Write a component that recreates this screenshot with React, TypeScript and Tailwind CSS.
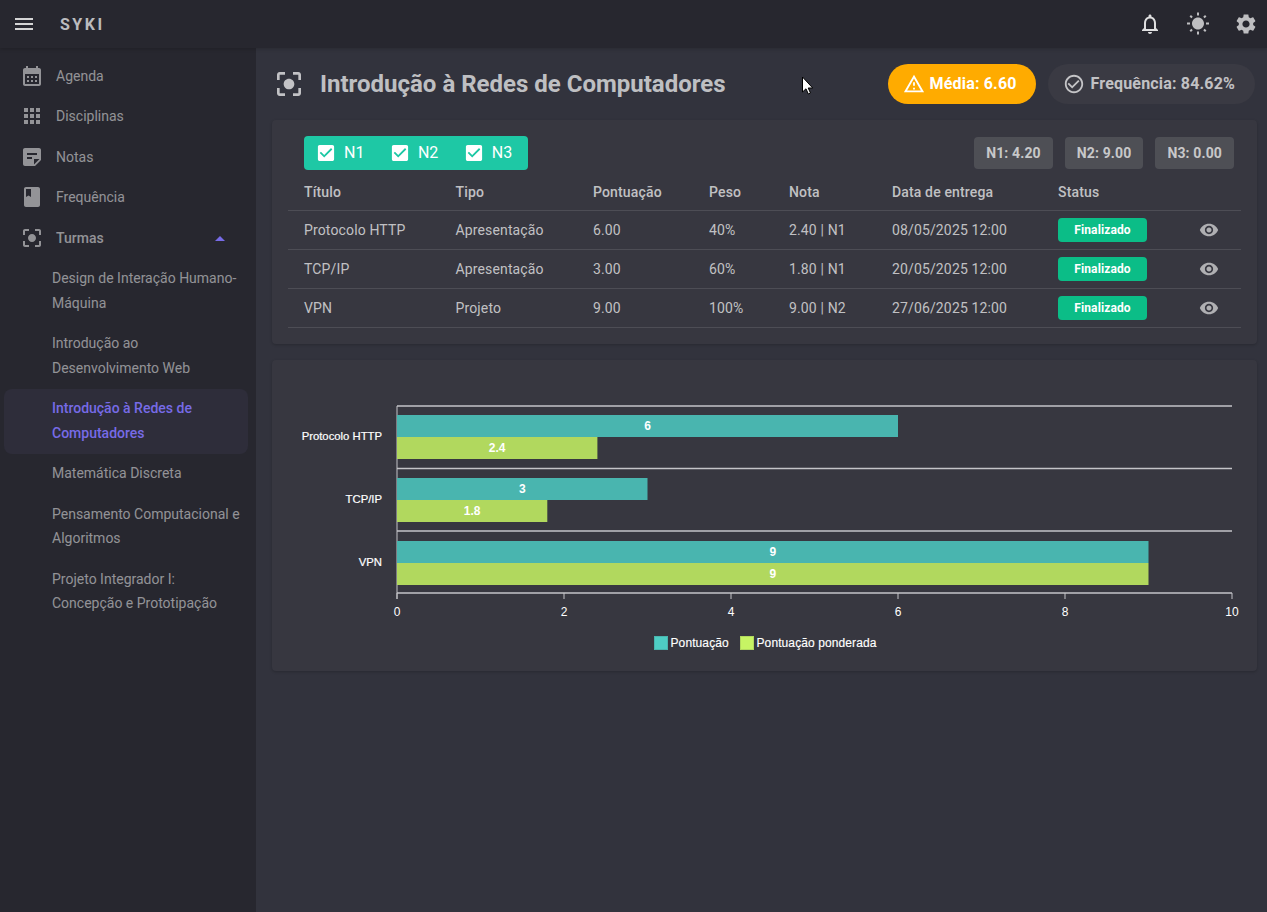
import React from 'react';

const icons = {
  menu: 'M3 18h18v-2H3v2zm0-5h18v-2H3v2zm0-7v2h18V6H3z',
  calendar: 'M19 4h-1V2h-2v2H8V2H6v2H5c-1.1 0-2 .9-2 2v14c0 1.1.9 2 2 2h14c1.1 0 2-.9 2-2V6c0-1.1-.9-2-2-2zm0 16H5V10h14v10zM9 14H7v-2h2v2zm4 0h-2v-2h2v2zm4 0h-2v-2h2v2zm-8 4H7v-2h2v2zm4 0h-2v-2h2v2zm4 0h-2v-2h2v2z',
  apps: 'M4 8h4V4H4v4zm6 12h4v-4h-4v4zm-6 0h4v-4H4v4zm0-6h4v-4H4v4zm6 0h4v-4h-4v4zm6-10v4h4V4h-4zm-6 4h4V4h-4v4zm6 6h4v-4h-4v4zm0 6h4v-4h-4v4z',
  note: 'M19 3H4.99C3.89 3 3 3.9 3 5l.01 14c0 1.1.89 2 1.99 2h10l6-6V5c0-1.1-.9-2-2-2zM7 8h10v2H7V8zm5 6H7v-2h5v2zm2 5.5V14h5.5L14 19.5z',
  book: 'M18 2H6c-1.1 0-2 .9-2 2v16c0 1.1.9 2 2 2h12c1.1 0 2-.9 2-2V4c0-1.1-.9-2-2-2zM6 4h5v8l-2.5-1.5L6 12V4z',
  focus: 'M5 15H3v4c0 1.1.9 2 2 2h4v-2H5v-4zM5 5h4V3H5c-1.1 0-2 .9-2 2v4h2V5zm14-2h-4v2h4v4h2V5c0-1.1-.9-2-2-2zm0 16h-4v2h4c1.1 0 2-.9 2-2v-4h-2v4zM12 8c-2.21 0-4 1.79-4 4s1.79 4 4 4 4-1.79 4-4-1.79-4-4-4z',
  bell: 'M12 22c1.1 0 2-.9 2-2h-4c0 1.1.9 2 2 2zm6-6v-5c0-3.07-1.63-5.64-4.5-6.32V4c0-.83-.67-1.5-1.5-1.5s-1.5.67-1.5 1.5v.68C7.64 5.36 6 7.92 6 11v5l-2 2v1h16v-1l-2-2zm-2 1H8v-6c0-2.48 1.51-4.5 4-4.5s4 2.02 4 4.5v6z',
  sun: 'M6.76 4.84l-1.8-1.79-1.41 1.41 1.79 1.79 1.42-1.41zM4 10.5H1v2h3v-2zm9-9.95h-2V3.5h2V.55zm7.45 3.91l-1.41-1.41-1.79 1.79 1.41 1.41 1.79-1.79zm-3.21 13.7l1.79 1.8 1.41-1.41-1.8-1.79-1.4 1.4zM20 10.5v2h3v-2h-3zm-8-5c-3.31 0-6 2.69-6 6s2.69 6 6 6 6-2.69 6-6-2.69-6-6-6zm-1 16.95h2V19.5h-2v2.95zm-7.45-3.91l1.41 1.41 1.79-1.8-1.41-1.41-1.79 1.8z',
  gear: 'M19.14 12.94c.04-.3.06-.61.06-.94 0-.32-.02-.64-.07-.94l2.03-1.58c.18-.14.23-.41.12-.61l-1.92-3.32c-.12-.22-.37-.29-.59-.22l-2.39.96c-.5-.38-1.03-.7-1.62-.94l-.36-2.54c-.04-.24-.24-.41-.48-.41h-3.84c-.24 0-.43.17-.47.41l-.36 2.54c-.59.24-1.13.57-1.62.94l-2.39-.96c-.22-.08-.47 0-.59.22L2.74 8.87c-.12.21-.08.47.12.61l2.03 1.58c-.05.3-.09.63-.09.94s.02.64.07.94l-2.03 1.58c-.18.14-.23.41-.12.61l1.92 3.32c.12.22.37.29.59.22l2.39-.96c.5.38 1.03.7 1.62.94l.36 2.54c.05.24.24.41.48.41h3.84c.24 0 .44-.17.47-.41l.36-2.54c.59-.24 1.13-.56 1.62-.94l2.39.96c.22.08.47 0 .59-.22l1.92-3.32c.12-.22.07-.47-.12-.61l-2.01-1.58zM12 15.6c-1.98 0-3.6-1.62-3.6-3.6s1.62-3.6 3.6-3.6 3.6 1.62 3.6 3.6-1.62 3.6-3.6 3.6z',
  warning: 'M12 5.99L19.53 19H4.47L12 5.99M12 2L1 21h22L12 2zm1 14h-2v2h2v-2zm0-6h-2v4h2v-4z',
  checkCircle: 'M16.59 7.58L10 14.17l-3.59-3.58L5 12l5 5 8-8zM12 2C6.48 2 2 6.48 2 12s4.48 10 10 10 10-4.48 10-10S17.52 2 12 2zm0 18c-4.42 0-8-3.58-8-8s3.58-8 8-8 8 3.58 8 8-3.58 8-8 8z',
  eye: 'M12 4.5C7 4.5 2.73 7.61 1 12c1.73 4.39 6 7.5 11 7.5s9.27-3.11 11-7.5c-1.73-4.39-6-7.5-11-7.5zM12 17c-2.76 0-5-2.24-5-5s2.24-5 5-5 5 2.24 5 5-2.24 5-5 5zm0-8c-1.66 0-3 1.34-3 3s1.34 3 3 3 3-1.34 3-3-1.34-3-3-3z',
  checkbox: 'M19 3H5c-1.11 0-2 .9-2 2v14c0 1.1.89 2 2 2h14c1.11 0 2-.9 2-2V5c0-1.1-.89-2-2-2zm-9 14l-5-5 1.41-1.41L10 14.17l7.59-7.59L19 8l-9 9z',
};

function Icon({ d, className }: { d: string; className?: string }) {
  return (
    <svg viewBox="0 0 24 24" fill="currentColor" className={className}>
      <path d={d} />
    </svg>
  );
}

const navItems = [
  { label: 'Agenda', icon: icons.calendar, cls: 'h-10' },
  { label: 'Disciplinas', icon: icons.apps, cls: 'h-10' },
  { label: 'Notas', icon: icons.note, cls: 'h-[41px]' },
  { label: 'Frequência', icon: icons.book, cls: 'h-10' },
];

const turmas = [
  { label: 'Design de Interação Humano-Máquina' },
  { label: 'Introdução ao Desenvolvimento Web' },
  { label: 'Introdução à Redes de Computadores', active: true },
  { label: 'Matemática Discreta' },
  { label: 'Pensamento Computacional e Algoritmos' },
  { label: 'Projeto Integrador I: Concepção e Prototipação' },
];

const rows = [
  ['Protocolo HTTP', 'Apresentação', '6.00', '40%', '2.40 | N1', '08/05/2025 12:00'],
  ['TCP/IP', 'Apresentação', '3.00', '60%', '1.80 | N1', '20/05/2025 12:00'],
  ['VPN', 'Projeto', '9.00', '100%', '9.00 | N2', '27/06/2025 12:00'],
];

const headers = ['Título', 'Tipo', 'Pontuação', 'Peso', 'Nota', 'Data de entrega', 'Status', ''];

const chartRows = [
  { label: 'Protocolo HTTP', y: 415, a: 6, b: 2.4 },
  { label: 'TCP/IP', y: 478, a: 3, b: 1.8 },
  { label: 'VPN', y: 541, a: 9, b: 9 },
];

const X0 = 397;
const UNIT = 83.5;

function Chart() {
  return (
    <svg viewBox="272 360 985 311" className="block h-[311px] w-full" style={{ fontFamily: '"Liberation Sans", Arial, sans-serif' }}>
      {[406, 468.5, 531, 593].map(y => (
        <line key={y} x1={X0} x2={1232} y1={y} y2={y} stroke="#c4c4c8" strokeWidth="1.3" />
      ))}
      <line x1={X0} x2={X0} y1={406} y2={599} stroke="#c4c4c8" strokeWidth="1" />
      {[0, 2, 4, 6, 8, 10].map(t => (
        <g key={t}>
          <line x1={X0 + t * UNIT} x2={X0 + t * UNIT} y1={593} y2={599} stroke="#c4c4c8" strokeWidth="1" />
          <text x={X0 + t * UNIT} y={616} textAnchor="middle" fontSize="12" fill="#fff">{t}</text>
        </g>
      ))}
      {chartRows.map(r => (
        <g key={r.label}>
          <rect x={X0} y={r.y} width={r.a * UNIT} height={22} fill="#49b5af" />
          <rect x={X0} y={r.y + 22} width={r.b * UNIT} height={22} fill="#b1d85e" />
          <text x={X0 + (r.a * UNIT) / 2} y={r.y + 15} textAnchor="middle" fontSize="12" fontWeight="700" fill="#fff">{r.a}</text>
          <text x={X0 + (r.b * UNIT) / 2} y={r.y + 37} textAnchor="middle" fontSize="12" fontWeight="700" fill="#fff">{r.b}</text>
          <text x={382} y={r.y + 25} textAnchor="end" fontSize="11.3" stroke="#fff" strokeWidth="0.2" fill="#fff">{r.label}</text>
        </g>
      ))}
      <rect x={654.5} y={636.5} width={13} height={13} fill="#4ecdc4" stroke="#49b5af" />
      <text x={670.5} y={647} fontSize="12" letterSpacing="0.1" stroke="#fff" strokeWidth="0.15" fill="#fff">Pontuação</text>
      <rect x={740.5} y={636.5} width={13} height={13} fill="#c7f464" stroke="#b1d85e" />
      <text x={756.5} y={647} fontSize="12" letterSpacing="0.1" stroke="#fff" strokeWidth="0.15" fill="#fff">Pontuação ponderada</text>
    </svg>
  );
}

function App() {
  return (
    <div className="relative flex h-screen min-h-[912px] flex-col overflow-hidden bg-[#32333d] font-['Roboto',sans-serif] text-sm text-white/70">
      {/* App bar */}
      <header className="z-10 flex h-12 shrink-0 items-center bg-[#27272f] pl-3 pr-[9px] shadow-[0_1px_4px_rgba(0,0,0,0.2)]">
        <Icon d={icons.menu} className="h-6 w-6 text-white/80" />
        <span className="ml-6 pt-px text-base font-bold tracking-[2.5px] text-white/70">SYKI</span>
        <div className="ml-auto flex items-center gap-6">
          <Icon d={icons.bell} className="h-6 w-6 text-white/85" />
          <Icon d={icons.sun} className="h-6 w-6 text-white/70" />
          <Icon d={icons.gear} className="h-6 w-6 text-white/70" />
        </div>
      </header>

      <div className="flex min-h-0 flex-1">
        {/* Sidebar */}
        <aside className="w-64 shrink-0 bg-[#27272f] pt-2">
          {navItems.map(item => (
            <div key={item.label} className={`flex items-center pl-5 ${item.cls}`}>
              <Icon d={item.icon} className="h-6 w-6 text-white/50" />
              <span className="ml-3 text-sm text-white/50">{item.label}</span>
            </div>
          ))}
          <div className="mt-px flex h-10 items-center pl-5 pr-[31px]">
            <Icon d={icons.focus} className="h-6 w-6 text-white/50" />
            <span className="ml-3 font-medium text-white/50">Turmas</span>
            <span className="ml-auto h-0 w-0 border-x-[5px] border-b-[5px] border-x-transparent border-b-[#776be7]" />
          </div>
          {turmas.map(t => (
            <div
              key={t.label}
              className={`ml-1 w-[244px] rounded-lg pl-12 pr-1 leading-[24.5px] ${t.active ? '-mb-px mt-px bg-[#2e2d3a] pb-[9px] pt-[7px] font-medium text-[#776be7]' : 'py-2 text-white/50'}`}
            >
              {t.label}
            </div>
          ))}
        </aside>

        {/* Main */}
        <main className="min-w-0 flex-1 pl-4 pr-[10px]">
          <div className="flex h-[72px] items-center">
            <Icon d={icons.focus} className="ml-[1px] h-8 w-8 text-white/70" />
            <h1 className="ml-[15px] text-2xl font-bold text-white/70">Introdução à Redes de Computadores</h1>
            <div className="ml-auto flex items-center gap-3">
              <div className="flex h-10 items-center rounded-[20px] bg-[#ffab00] pl-[15px] pr-[19px] text-base font-bold tracking-[0.17px] text-white">
                <Icon d={icons.warning} className="mr-[5px] h-[22px] w-[22px]" />
                Média: 6.60
              </div>
              <div className="mr-[2px] flex h-10 items-center rounded-[20px] bg-[#3a3a43] pl-[15px] pr-5 text-base font-bold tracking-[0.17px] text-white/70">
                <Icon d={icons.checkCircle} className="mr-[6px] h-[22px] w-[22px]" />
                Frequência: 84.62%
              </div>
            </div>
          </div>

          {/* Activities card */}
          <section className="rounded bg-[#373740] px-4 pb-4 shadow-[0_1px_3px_rgba(0,0,0,0.2)]">
            <div className="flex items-center justify-between pl-4 pr-[7px] pt-4">
              <div className="flex h-[34px] items-center rounded bg-[#1ec8a5] pl-[13px] pr-4 text-base text-white">
                {['N1', 'N2', 'N3'].map((n, i) => (
                  <div key={n} className={`flex items-center ${i > 0 ? 'ml-[26.5px]' : ''}`}>
                    <Icon d={icons.checkbox} className="h-[18px] w-[18px] scale-[1.2]" />
                    <span className="ml-[9px]">{n}</span>
                  </div>
                ))}
              </div>
              <div className="flex gap-3">
                {['N1: 4.20', 'N2: 9.00', 'N3: 0.00'].map(n => (
                  <div key={n} className="flex h-8 items-center rounded bg-[#4e4f55] px-3 font-bold tracking-[0.14px] text-white/70">
                    {n}
                  </div>
                ))}
              </div>
            </div>
            <table className="w-full table-fixed border-collapse">
              <colgroup>
                <col className="w-[151.5px]" />
                <col className="w-[137.5px]" />
                <col className="w-[116px]" />
                <col className="w-[80px]" />
                <col className="w-[103px]" />
                <col className="w-[166px]" />
                <col className="w-[130px]" />
                <col />
              </colgroup>
              <thead>
                <tr className="h-[40px] border-b border-[#4d4d55]">
                  {headers.map((h, i) => (
                    <th key={i} className="pl-4 pt-[5px] text-left font-medium tracking-[0.15px] text-white/70">{h}</th>
                  ))}
                </tr>
              </thead>
              <tbody>
                {rows.map(row => (
                  <tr key={row[0]} className="h-[39px] border-b border-[#4d4d55]">
                    {row.map((cell, i) => (
                      <td key={i} className="pl-4 tracking-[0.14px] text-white/70">{cell}</td>
                    ))}
                    <td className="pl-4">
                      <span className="flex h-6 w-[89px] items-center justify-center rounded bg-[#0bbd87] text-xs font-bold tracking-[0.1px] text-white">Finalizado</span>
                    </td>
                    <td className="pl-[27px]">
                      <Icon d={icons.eye} className="h-5 w-5 text-white/60" />
                    </td>
                  </tr>
                ))}
              </tbody>
            </table>
          </section>

          {/* Chart card */}
          <section className="mt-4 rounded bg-[#373740] shadow-[0_1px_3px_rgba(0,0,0,0.2)]">
            <Chart />
          </section>
        </main>
      </div>

      {/* Mouse pointer caught in the capture */}
      <svg viewBox="0 0 13 19" className="absolute left-[801px] top-[76px] h-[19px] w-[13px]">
        <path d="M1.5 1v15l3.5-3.2 2.3 5.2 2.2-1-2.3-5h4.5z" fill="#fff" stroke="#000" strokeWidth="1" />
      </svg>
    </div>
  );
}

export default App;
